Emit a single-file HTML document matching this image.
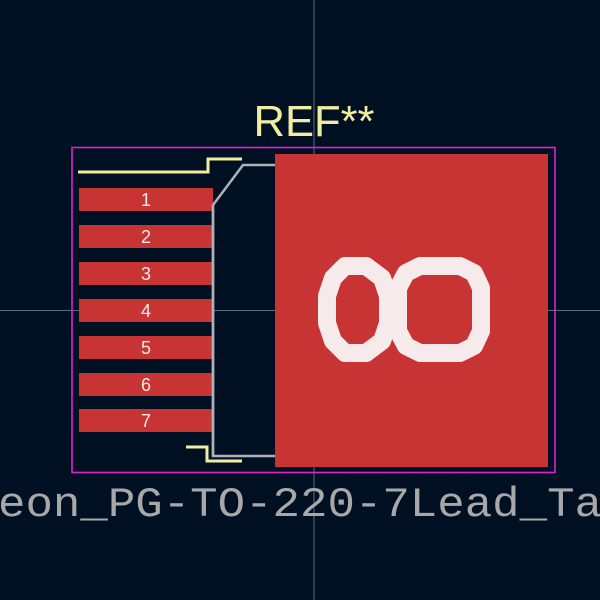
<!DOCTYPE html>
<html><head><style>
html,body{margin:0;padding:0;background:#001023;width:600px;height:600px;overflow:hidden}
svg{position:absolute;left:0;top:0}
</style></head><body>
<svg width="600" height="600" viewBox="0 0 600 600">
<rect width="600" height="600" fill="#001023"/>
<line x1="314" y1="0" x2="314" y2="600" stroke="#8a93a0" stroke-width="1" opacity="0.7"/>
<line x1="0" y1="310.5" x2="600" y2="310.5" stroke="#8a93a0" stroke-width="1" opacity="0.7"/>
<rect x="275" y="154" width="273" height="313" fill="#c83434"/>
<g fill="#c83434">
<rect x="79" y="188" width="134" height="23"/>
<rect x="79" y="225" width="134" height="23"/>
<rect x="79" y="262" width="134" height="23"/>
<rect x="79" y="299" width="134" height="23"/>
<rect x="79" y="336" width="134" height="23"/>
<rect x="79" y="373" width="134" height="23"/>
<rect x="79" y="409" width="134" height="23"/>
</g>
<g fill="#f5eaea" font-family="Liberation Sans, sans-serif" font-size="18" text-anchor="middle">
<text x="146" y="206">1</text><text x="146" y="243">2</text><text x="146" y="280">3</text>
<text x="146" y="317">4</text><text x="146" y="354">5</text><text x="146" y="391">6</text><text x="146" y="427">7</text>
</g>
<g fill="none" stroke="#f7eaea" stroke-width="18" stroke-linejoin="round">
<polygon points="345,266 366,266 382,278 388,296 388,323 382,341 366,353 345,353 333,341 327,323 327,296 333,278"/>
<polygon points="420,266 460,266 474,273 481,288 481,331 474,346 460,353 420,353 406,346 398,331 398,288 406,273"/>
</g>
<polyline points="213,456 213,205 243,165 275,165" fill="none" stroke="#b0b0b8" stroke-width="2.5"/>
<polyline points="213,205 213,456 275,456" fill="none" stroke="#b0b0b8" stroke-width="2.5"/>
<polyline points="78,172 208,172 208,159 242,159" fill="none" stroke="#f2ec9f" stroke-width="3"/>
<polyline points="186,447 207,447 207,461 242,461" fill="none" stroke="#f2ec9f" stroke-width="3"/>
<rect x="72" y="147.5" width="483" height="325" fill="none" stroke="#e020d0" stroke-width="1.6"/>
<text x="314" y="136" text-anchor="middle" fill="#f2ec9f" font-family="Liberation Sans, sans-serif" font-size="44" textLength="121" lengthAdjust="spacingAndGlyphs">REF**</text>
<text x="-2" y="516" fill="#a8a8a8" font-family="Liberation Mono, monospace" font-size="42" textLength="604" lengthAdjust="spacingAndGlyphs">eon_PG-TO-220-7Lead_Ta</text>
</svg>
</body></html>
